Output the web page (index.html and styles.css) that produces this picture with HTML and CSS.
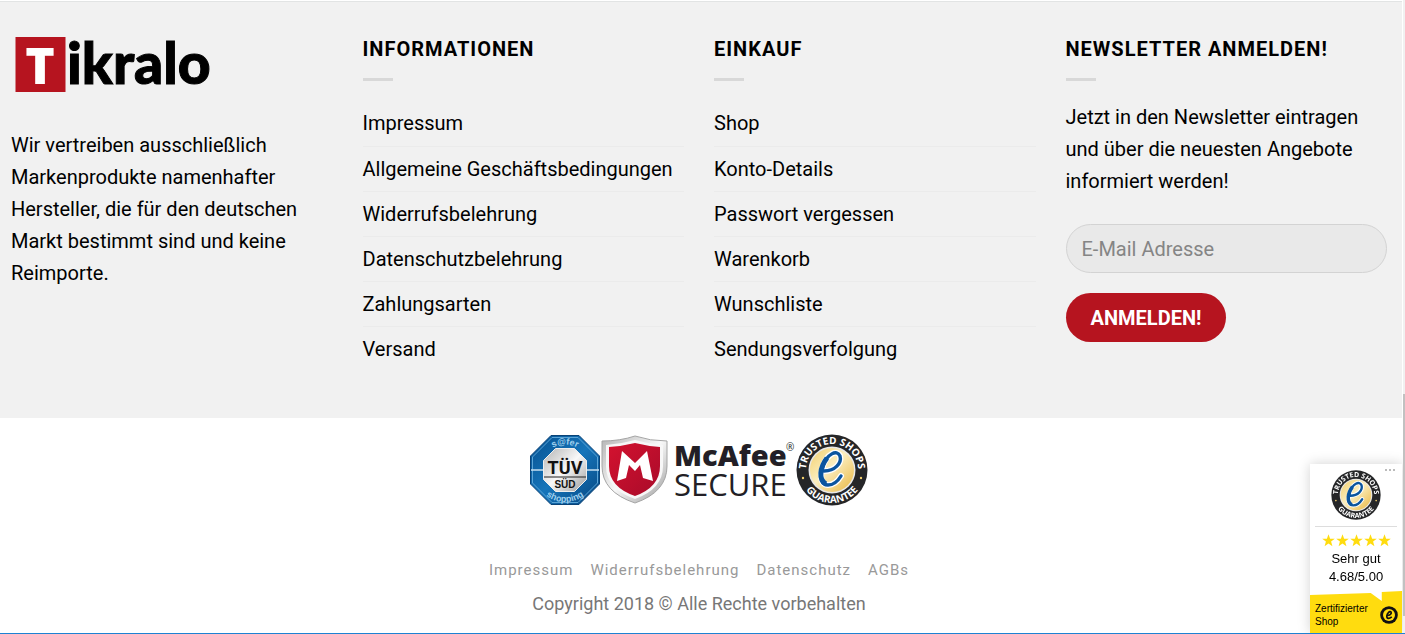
FILE: index.html
```html
<!DOCTYPE html>
<html lang="de">
<head>
<meta charset="utf-8">
<meta name="viewport" content="width=device-width, initial-scale=1">
<title>Tikralo</title>
<link rel="stylesheet" href="styles.css">
</head>
<body>
<svg class="defs" width="0" height="0" aria-hidden="true">
  <defs>
    <linearGradient id="gold" x1="0" y1="0" x2="1" y2="1">
      <stop offset="0" stop-color="#f3cf6c"/><stop offset=".45" stop-color="#fbeec0"/><stop offset="1" stop-color="#e9b63f"/>
    </linearGradient>
    <linearGradient id="silver" x1="0" y1="0" x2="1" y2="1">
      <stop offset="0" stop-color="#b4b4b4"/><stop offset=".5" stop-color="#f8f8f8"/><stop offset="1" stop-color="#9a9a9a"/>
    </linearGradient>
    <linearGradient id="blue" x1="0" y1="0" x2="1" y2="1">
      <stop offset="0" stop-color="#06508f"/><stop offset=".5" stop-color="#1675ba"/><stop offset="1" stop-color="#06457f"/>
    </linearGradient>
    <linearGradient id="red" x1="0" y1="0" x2="1" y2="1">
      <stop offset="0" stop-color="#d3122f"/><stop offset="1" stop-color="#a90b2a"/>
    </linearGradient>
    <path id="arc-top" d="M17.600 54.400A26 26 0 1 1 54.400 54.400"/>
    <path id="arc-bottom" d="M3 36a33 33 0 0 0 66 0"/>
    <symbol id="seal" viewBox="0 0 72 72">
      <circle cx="36" cy="36" r="35.500" fill="#252628"/>
      <circle cx="36" cy="36" r="23.500" fill="#e8e8e8"/>
      <circle cx="36" cy="36" r="22" fill="url(#gold)"/>
      <text class="seal-text" text-anchor="middle"><textPath href="#arc-top" startOffset="50%">TRUSTED SHOPS</textPath></text>
      <text class="seal-text" text-anchor="middle"><textPath href="#arc-bottom" startOffset="50%">GUARANTEE</textPath></text>
      <circle cx="7" cy="44" r="1.200" fill="#f3cf6c"/><circle cx="65" cy="44" r="1.200" fill="#f3cf6c"/>
      <path d="M28 37C39 37 46 29 44 22C41 15 31 20 27 32C23 45 26 51 32 51C38 51 42 47 45 42" fill="none" stroke="#fff" stroke-width="6" stroke-linecap="round"/>
      <path d="M28 37C39 37 46 29 44 22C41 15 31 20 27 32C23 45 26 51 32 51C38 51 42 47 45 42" fill="none" stroke="#0b559f" stroke-width="3.400" stroke-linecap="round"/>
      <path d="M31 24C24 33 22 46 30 50" fill="none" stroke="#0b559f" stroke-width="5"/>
    </symbol>
    <symbol id="star" viewBox="0 0 12 12"><path d="M6 .3L7.500 4.400H11.800L8.400 7L9.600 11.300L6 8.700L2.400 11.300L3.600 7L.2 4.400H4.500Z" fill="#ffdc0f"/></symbol>
  </defs>
</svg>

<div class="page">
  <footer class="widgets">
    <section class="column about">
      <svg class="logo" viewBox="0 0 200 56" role="img" aria-label="Tikralo">
        <rect x=".5" y="0" width="50" height="55" fill="#b6141f"/>
        <text class="logo-initial" x="25" y="47" text-anchor="middle">T</text>
        <text class="logo-name" x="52" y="47">ikralo</text>
      </svg>
      <p>Wir vertreiben ausschließlich Markenprodukte namenhafter Hersteller, die für den deutschen Markt bestimmt sind und keine Reimporte.</p>
    </section>
    <nav class="column" aria-labelledby="info-title">
      <h2 id="info-title">INFORMATIONEN</h2>
      <ul class="links">
        <li><a href="#">Impressum</a></li>
        <li><a href="#">Allgemeine Geschäftsbedingungen</a></li>
        <li><a href="#">Widerrufsbelehrung</a></li>
        <li><a href="#">Datenschutzbelehrung</a></li>
        <li><a href="#">Zahlungsarten</a></li>
        <li><a href="#">Versand</a></li>
      </ul>
    </nav>
    <nav class="column" aria-labelledby="shop-title">
      <h2 id="shop-title">EINKAUF</h2>
      <ul class="links">
        <li><a href="#">Shop</a></li>
        <li><a href="#">Konto-Details</a></li>
        <li><a href="#">Passwort vergessen</a></li>
        <li><a href="#">Warenkorb</a></li>
        <li><a href="#">Wunschliste</a></li>
        <li><a href="#">Sendungsverfolgung</a></li>
      </ul>
    </nav>
    <section class="column">
      <h2>NEWSLETTER ANMELDEN!</h2>
      <p>Jetzt in den Newsletter eintragen und über die neuesten Angebote informiert werden!</p>
      <form class="newsletter">
        <input type="email" placeholder="E-Mail Adresse" aria-label="E-Mail Adresse">
        <button type="submit">ANMELDEN!</button>
      </form>
    </section>
  </footer>

  <div class="absolute-footer">
    <div class="badges">
      <svg class="tuv" viewBox="0 0 70 70" role="img" aria-label="TÜV SÜD s@fer shopping">
        <defs><path id="tuv-top" d="M9.500 35a25.500 25.500 0 0 1 51 0"/><path id="tuv-bottom" d="M3 35a32 32 0 0 0 64 0"/></defs>
        <path d="M21 .5H49L69.500 21V49L49 69.500H21L.5 49V21Z" fill="url(#blue)" stroke="#0a4377"/>
        <path d="M22 2.500H48L67.500 22V48L48 67.500H22L2.500 48V22Z" fill="none" stroke="#5ba4d6" stroke-width="1"/>
        <path d="M1 35H69" stroke="#c9e0f0" stroke-width="1.500"/>
        <path d="M25.500 13.500H44.500L56.500 25.500V44.500L44.500 56.500H25.500L13.500 44.500V25.500Z" fill="url(#silver)" stroke="#eee"/>
        <text class="tuv-ring" text-anchor="middle"><textPath href="#tuv-top" startOffset="50%">s@fer</textPath></text>
        <text class="tuv-ring" text-anchor="middle"><textPath href="#tuv-bottom" startOffset="50%">shopping</textPath></text>
        <text class="tuv-name" x="35" y="39" text-anchor="middle">TÜV</text>
        <path d="M14 42H56" stroke="#222" stroke-width="1"/>
        <text class="tuv-sub" x="35" y="53" text-anchor="middle">SÜD</text>
      </svg>
      <svg class="mcafee" viewBox="0 0 194 70" role="img" aria-label="McAfee SECURE">
        <path d="M1 6Q19 6 34 1Q49 6 66 6V31Q66 57 34 68Q1 57 1 31Z" fill="url(#silver)" stroke="#a5a5a5"/>
        <path d="M5 10Q20 9 34 5Q48 9 62 10V31Q62 54 34 64Q5 54 5 31Z" fill="#f7f7f7"/>
        <path d="M8 12Q22 11 34 8Q46 11 59 12V31Q59 52 34 61Q8 52 8 31Z" fill="url(#red)"/>
        <path d="M16 46L21 16L34 28L46 16L52 46L42 43L39 30L34 36L28 30L25 43Z" fill="#fff"/>
        <text class="mcafee-name" x="73" y="31">McAfee</text>
        <text class="mcafee-mark" x="185" y="16">®</text>
        <text class="mcafee-sub" x="73" y="61">SECURE</text>
      </svg>
      <svg class="seal-large" role="img" aria-label="Trusted Shops Guarantee"><use href="#seal"/></svg>
    </div>
    <nav class="legal" aria-label="Rechtliches">
      <a href="#">Impressum</a>
      <a href="#">Widerrufsbelehrung</a>
      <a href="#">Datenschutz</a>
      <a href="#">AGBs</a>
    </nav>
    <p class="copyright">Copyright 2018 © Alle Rechte vorbehalten</p>
  </div>
</div>

<aside class="trustbadge" aria-label="Trusted Shops Bewertung">
  <svg class="more" viewBox="0 0 10 2" aria-hidden="true"><path d="M0 0h2v2H0zM4 0h2v2H4zM8 0h2v2H8z" fill="#bbb"/></svg>
  <svg class="seal-small" aria-hidden="true"><use href="#seal"/></svg>
  <div class="rating">
    <div class="stars" role="img" aria-label="5 Sterne">
      <svg><use href="#star"/></svg><svg><use href="#star"/></svg><svg><use href="#star"/></svg><svg><use href="#star"/></svg><svg><use href="#star"/></svg>
    </div>
    <div>Sehr gut</div>
    <div>4.68/5.00</div>
  </div>
  <div class="certified">
    <span>Zertifizierter Shop</span>
    <svg viewBox="0 0 18 18" aria-hidden="true">
      <circle cx="9" cy="9" r="8.800" fill="#111"/><circle cx="9" cy="9" r="6" fill="#ffdc0f"/>
      <path d="M7 9.500C10 9.500 12 7.500 11 6C10 4.500 7 7 6.800 10C6.700 13 9 13 11.800 10.800" fill="none" stroke="#111" stroke-width="1.700"/>
    </svg>
  </div>
</aside>
<div class="scroll-track" aria-hidden="true"><div class="scroll-thumb"></div></div>
<div class="window-edge" aria-hidden="true"></div>
</body>
</html>
```

FILE: styles.css
```css
* { box-sizing: border-box; }
body {
  margin: 0;
  padding-right: 3px;
  background: #fff;
  color: #000;
  font-family: Roboto, "Liberation Sans", sans-serif;
  font-size: 20px;
  line-height: 32px;
  overflow: hidden;
}
a { color: inherit; text-decoration: none; }
p { margin: 0; }
.defs { position: absolute; }
.page { padding-top: 1px; }

.widgets {
  display: grid;
  grid-template-columns: repeat(4, minmax(0, 1fr));
  gap: 30px;
  padding: 35px 15px 47px 11px;
  border-top: 1px solid #e2e4e4;
  background: #f1f1f1;
}
.about { display: flex; flex-direction: column; gap: 36px; }
.logo { width: 200px; height: 56px; margin-left: 4px; overflow: visible; }
.logo-initial { font: 800 50px "Open Sans", sans-serif; fill: #fff; }
.logo-name {
  font: 900 57px Lato, sans-serif;
  fill: #000;
  stroke: #000;
  stroke-width: 1px;
}

h2 {
  margin: 0;
  font-size: 20px;
  font-weight: 700;
  line-height: 24px;
  letter-spacing: 1px;
}
h2::after {
  content: "";
  display: block;
  width: 30px;
  height: 3px;
  margin: 17px 0 20px;
  background: #d8d8d8;
}
.links { margin: 0; padding: 0; list-style: none; }
.links li { height: 45px; line-height: 44px; }
.links li + li { border-top: 1px solid #ebebeb; }

.newsletter {
  display: flex;
  flex-direction: column;
  align-items: flex-start;
  gap: 20px;
  margin-top: 27px;
}
.newsletter input {
  width: 100%;
  height: 49px;
  padding: 0 15px;
  border: 1px solid #d3d3d3;
  border-radius: 25px;
  background: #e9e9e9;
  font: inherit;
}
.newsletter input::placeholder { color: #858585; opacity: 1; }
.newsletter button {
  height: 49px;
  padding: 0 25px;
  border: 0;
  border-radius: 25px;
  background: #b6141f;
  color: #fff;
  font: 700 20px Roboto, sans-serif;
}

.absolute-footer {
  display: flex;
  flex-direction: column;
  align-items: center;
  padding: 16px 4px 0 0;
  color: #777;
}
.badges { display: flex; align-items: center; gap: 1px; }
.badges svg { display: block; }
.tuv { width: 70px; height: 70px; }
.tuv-ring { font: 700 9px "Liberation Sans", sans-serif; fill: #9fd0ee; }
.tuv-name { font: 700 18px Roboto, sans-serif; fill: #111; }
.tuv-sub { font: 700 10px "Liberation Sans", sans-serif; fill: #111; }
.mcafee { width: 194px; height: 70px; }
.mcafee-name { font: 800 29px "Open Sans", sans-serif; fill: #231f26; }
.mcafee-sub { font: 400 31px "Open Sans", sans-serif; fill: #231f26; }
.mcafee-mark { font: 400 10px "Open Sans", sans-serif; fill: #231f26; }
.seal-large { width: 72px; height: 72px; }
.seal-text { font: 700 10px "Open Sans", sans-serif; fill: #fff; }
.legal {
  display: flex;
  gap: 17px;
  margin-top: 52px;
  font-size: 15px;
  line-height: 24px;
  letter-spacing: 1px;
  color: #999;
}
.copyright { margin-top: 6px; font-size: 18px; }

.trustbadge {
  position: fixed;
  right: 3px;
  bottom: 1px;
  width: 92px;
  padding-top: 6px;
  background: #fff;
  box-shadow: 0 0 12px rgba(0, 0, 0, .18);
  font: 13px/18px "Liberation Sans", sans-serif;
  text-align: center;
}
.more { position: absolute; top: 5px; right: 7px; width: 10px; height: 2px; }
.seal-small { display: block; width: 50px; height: 50px; margin: 0 auto; }
.rating { margin: 6px 5px 5px; padding-top: 7px; border-top: 1px solid #ddd; }
.stars { display: flex; justify-content: center; gap: 1px; margin-bottom: 3px; }
.stars svg { width: 13px; height: 13px; }
.certified {
  display: flex;
  align-items: center;
  justify-content: space-between;
  height: 42px;
  padding: 6px 4px 0 5px;
  background: #ffdc0f;
  clip-path: polygon(0 4px, 66% 2px, 78% 10px, 78% 1px, 100% 0, 100% 100%, 0 100%);
  font-size: 10px;
  line-height: 13px;
  text-align: left;
}
.certified span { width: 60px; }
.certified svg { flex: none; width: 18px; height: 18px; }

.scroll-track {
  position: fixed;
  top: 0;
  right: 0;
  bottom: 0;
  display: flex;
  flex-direction: column;
  justify-content: flex-end;
  width: 2px;
  padding-bottom: 18px;
  background: #f1f1f1;
}
.scroll-thumb { height: 36%; background: #c1c1c1; }
.window-edge {
  position: fixed;
  right: 0;
  bottom: 0;
  left: 0;
  height: 1px;
  background: #1e82d2;
}
```
